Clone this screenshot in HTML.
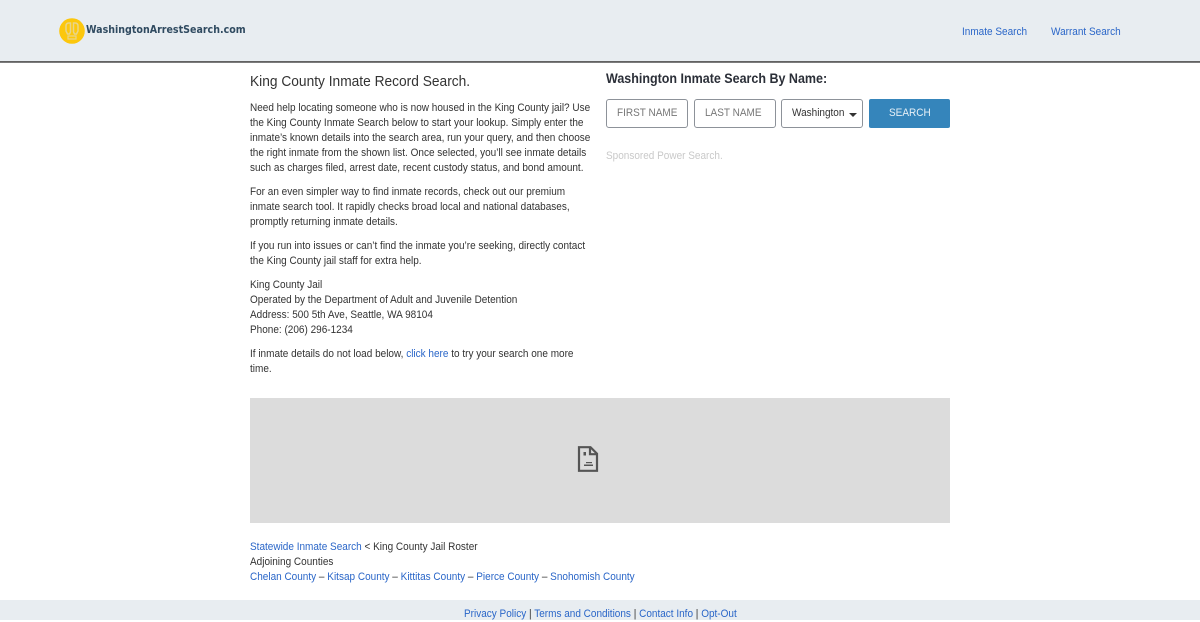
<!DOCTYPE html>
<html><head><meta charset="utf-8">
<style>
html,body{margin:0;padding:0;background:#fff}
body{width:1200px;height:620px;overflow:hidden;position:relative;font-family:"Liberation Sans",sans-serif;font-size:11px;color:#333}
a{color:#2a66c8;text-decoration:none}
.t{position:absolute;white-space:nowrap;line-height:15px;margin-top:1px;transform:scaleX(.909);transform-origin:0 0}
.hdr{position:absolute;left:0;top:0;width:1200px;height:61px;background:#e8edf1}
.ln{position:absolute;left:0;top:61px;width:1200px;height:2px;background:linear-gradient(#555,#888)}
.logo{position:absolute;left:86px;top:22px;font:bold 11px/16px "DejaVu Sans",sans-serif;color:#2f4a60;white-space:nowrap;transform:scaleX(.865);transform-origin:0 0}
.box{position:absolute;top:99px;width:79.5px;height:27px;border:1px solid #8d9299;border-radius:3px;background:#fff}
.btn{position:absolute;left:869px;top:99px;width:81px;height:29px;background:#3585bb;border-radius:2px}
.gray{position:absolute;left:250px;top:398px;width:700px;height:125px;background:#dcdcdc}
.ftr{position:absolute;left:0;top:600px;width:1200px;height:20px;background:#e8edf1}
</style></head><body>
<div class="hdr"></div><div class="ln"></div>
<svg style="position:absolute;left:59px;top:18px" width="26" height="26" viewBox="0 0 26 26">
<circle cx="13" cy="13" r="12.800" fill="#fcc70d"/>
<path d="M7 8q0-3 3-3h1.500v9l-1 2h-2l-1.500-3zM19 8q0-3-3-3h-1.500v9l1 2h2l1.500-3z" fill="none" stroke="#e9d58a" stroke-width="1.500"/>
<path d="M9 18h8v3H9z" fill="none" stroke="#e9d58a" stroke-width="1.200"/>
</svg>
<div class="logo">WashingtonArrestSearch.com</div>
<a class="t" style="left:962px;top:24px" href="#">Inmate Search</a>
<a class="t" style="left:1051px;top:24px" href="#">Warrant Search</a>

<div class="t" style="left:250px;top:73px;margin-top:0;font-size:15px;line-height:18px;transform:scaleX(.9167)">King County Inmate Record Search.</div>
<div class="t" style="left:250px;top:100px">Need help locating someone who is now housed in the King County jail? Use<br>the King County Inmate Search below to start your lookup. Simply enter the<br>inmate’s known details into the search area, run your query, and then choose<br>the right inmate from the shown list. Once selected, you’ll see inmate details<br>such as charges filed, arrest date, recent custody status, and bond amount.</div>
<div class="t" style="left:250px;top:184px">For an even simpler way to find inmate records, check out our premium<br>inmate search tool. It rapidly checks broad local and national databases,<br>promptly returning inmate details.</div>
<div class="t" style="left:250px;top:238px">If you run into issues or can’t find the inmate you’re seeking, directly contact<br>the King County jail staff for extra help.</div>
<div class="t" style="left:250px;top:277px">King County Jail<br>Operated by the Department of Adult and Juvenile Detention<br>Address: 500 5th Ave, Seattle, WA 98104<br>Phone: (206) 296-1234</div>
<div class="t" style="left:250px;top:346px">If inmate details do not load below, <a href="#">click here</a> to try your search one more<br>time.</div>

<div class="t" style="left:606px;top:70px;margin-top:0;font-size:14px;line-height:17px;font-weight:bold;color:#2b2f38;transform:scaleX(.893)">Washington Inmate Search By Name:</div>
<div class="box" style="left:606px"></div>
<div class="box" style="left:694px"></div>
<div class="box" style="left:781px"></div>
<div class="t" style="left:617px;top:105px;color:#777">FIRST NAME</div>
<div class="t" style="left:705px;top:105px;color:#777">LAST NAME</div>
<div class="t" style="left:792px;top:105px">Washington</div>
<svg style="position:absolute;left:849px;top:112px" width="9" height="6"><path d="M0 1h8L4 5z" fill="#333"/></svg>
<div class="btn"></div>
<div class="t" style="left:889px;top:105px;color:#e6f0f7">SEARCH</div>
<div class="t" style="left:606px;top:148px;color:#c9c9c9">Sponsored Power Search.</div>

<div class="gray"></div>
<svg style="position:absolute;left:577px;top:446px" width="22" height="26" viewBox="0 0 22 26" fill="none" stroke="#555" stroke-width="2.200">
<path d="M2 1.200h11.500l6.500 6.500v17.100H2z"/><path d="M13 1.200v7h7"/>
<rect x="6.500" y="6" width="2.500" height="3.500" fill="#555" stroke="none"/>
<rect x="9" y="16" width="6" height="1.200" fill="#555" stroke="none"/>
<rect x="7" y="18.500" width="9" height="1.500" fill="#555" stroke="none"/>
</svg>

<div class="t" style="left:250px;top:539px"><a href="#">Statewide Inmate Search</a> &lt; King County Jail Roster<br>Adjoining Counties<br><a href="#">Chelan County</a> – <a href="#">Kitsap County</a> – <a href="#">Kittitas County</a> – <a href="#">Pierce County</a> – <a href="#">Snohomish County</a></div>

<div class="ftr"></div>
<div class="t" style="left:464px;top:606px"><a href="#">Privacy Policy</a> | <a href="#">Terms and Conditions</a> | <a href="#">Contact Info</a> | <a href="#">Opt-Out</a></div>
</body></html>
